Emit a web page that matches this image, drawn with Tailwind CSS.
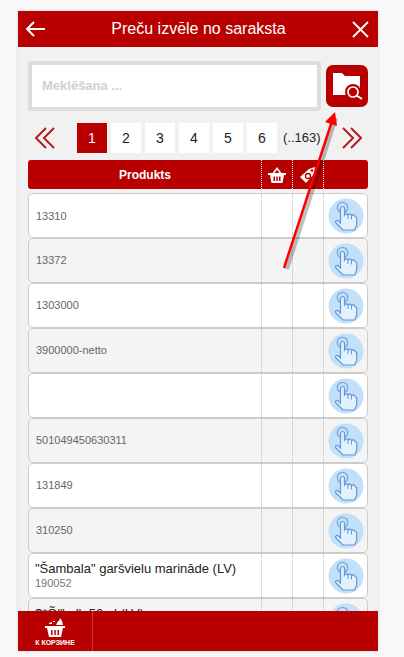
<!DOCTYPE html>
<html lang="en">
    <head>
        <meta charset="UTF-8" />
        <meta name="viewport" content="width=device-width, initial-scale=1.0" />
        <title>Preču izvēle no saraksta</title>
        <script src="https://cdn.jsdelivr.net/npm/@tailwindcss/browser@4"></script>
    </head>
    <body class="h-[657px] overflow-hidden bg-[#f8f8f8] font-['Liberation_Sans',Arial,sans-serif]">
        <svg class="hidden">
            <symbol id="hand" viewBox="0 0 36 36">
                <circle cx="18" cy="18" r="17.500" fill="#c2e0f7" />
                <circle cx="14.500" cy="9.500" r="5.200" fill="none" stroke="#7aa7e0" stroke-width="1.300" />
                <path fill="#e3f1fc" stroke="#6397dc" stroke-width="1.200" d="M12.500 10.500a2 2 0 0 1 4 0V17a2 2 0 0 1 3.500 0 2 2 0 0 1 3.500.500 2 2 0 0 1 3.500 1l1.700 1V27l-2 5H15l-7-7c-1.500-2 1-3.500 2.500-2l2 2z" />
                <path d="M20 17v4M23.500 17.500v4" stroke="#6397dc" stroke-width="1" />
            </symbol>
        </svg>

        <div class="relative mx-[18px] mt-[11px] flex h-[640px] w-[360px] flex-col overflow-hidden bg-[#f1f1f1] shadow-[0_0_3px_rgba(0,0,0,0.15)]">
            <!-- header -->
            <header class="flex h-9 shrink-0 items-center justify-between bg-[#b80000] pl-[7px] pr-[9px] text-white">
                <svg width="20" height="16" viewBox="0 0 20 16" fill="none" stroke="white" stroke-width="2"><path d="M20 8H2M9 1 2 8l7 7" /></svg>
                <h1 class="text-[16px]">Preču izvēle no saraksta</h1>
                <svg width="17" height="17" viewBox="0 0 17 17" fill="none" stroke="white" stroke-width="1.800"><path d="M1 1l15 15M16 1 1 16" /></svg>
            </header>

            <!-- search -->
            <div class="flex shrink-0 items-center gap-[5px] px-[10px] pt-[14px]">
                <div class="flex h-[50px] w-[293px] items-center rounded-[3px] border-4 border-[#dddddd] bg-white pl-[10px] text-[13px] font-bold text-[#d0d0d0]">Meklēšana ...</div>
                <button class="h-[42px] w-[42px] rounded-[7px] bg-[#b80000]">
                    <svg width="42" height="42" viewBox="0 0 42 42">
                        <path fill="white" d="M7 8h9l3 3h15v19H7z" />
                        <circle cx="27" cy="27" r="8" fill="#b80000" />
                        <circle cx="27" cy="27" r="5" fill="none" stroke="white" stroke-width="1.700" />
                        <path d="M30.500 30.500 36 34" stroke="white" stroke-width="2" />
                    </svg>
                </button>
            </div>

            <!-- pager -->
            <nav class="mt-[12px] flex h-[30px] shrink-0 items-center pl-[17px] text-[14px] text-[#222]">
                <svg class="mr-[22px]" width="20" height="22" viewBox="0 0 20 22" fill="none" stroke="#b02020" stroke-width="2"><path d="M11 1 1 11l10 10M19 1 9 11l10 10" /></svg>
                <div class="flex gap-1">
                    <span class="flex h-[30px] w-[30px] items-center justify-center bg-[#b80000] text-white">1</span>
                    <span class="flex h-[30px] w-[30px] items-center justify-center bg-white">2</span>
                    <span class="flex h-[30px] w-[30px] items-center justify-center bg-white">3</span>
                    <span class="flex h-[30px] w-[30px] items-center justify-center bg-white">4</span>
                    <span class="flex h-[30px] w-[30px] items-center justify-center bg-white">5</span>
                    <span class="flex h-[30px] w-[30px] items-center justify-center bg-white">6</span>
                </div>
                <span class="ml-[6px] w-[59px] whitespace-nowrap text-[13px]">(..163)</span>
                <svg width="20" height="22" viewBox="0 0 20 22" fill="none" stroke="#b02020" stroke-width="2"><path d="M1 1l10 10L1 21M9 1l10 10L9 21" /></svg>
            </nav>

            <!-- table head -->
            <div class="mx-[10px] mt-[7px] flex h-[29px] w-[340px] shrink-0 items-stretch rounded-[3px] bg-[#b80000] text-white">
                <div class="flex w-[233px] items-center justify-center pl-[1px] text-[12px] font-bold">Produkts</div>
                <div class="flex w-[31px] items-center justify-center border-l border-dotted border-white">
                    <svg width="18" height="16" viewBox="0 0 18 16" fill="white"><path d="M0 6h18v2H0zM2 8h14l-1.500 8h-11zM4.500 6 9 0l4.500 6h-2L9 2.800 6.500 6z" /><path fill="#b80000" d="M5.500 9.500H7V14H5.500zM8.300 9.500h1.500V14H8.300zM11 9.500h1.500V14H11z" /></svg>
                </div>
                <div class="flex w-[31px] items-center justify-center border-l border-dotted border-white">
                    <svg width="18" height="18" viewBox="0 0 18 18" fill="white"><path d="M1 11 10 3l6-2-1 7-8 9z" /><circle cx="13" cy="4.500" r="1.300" fill="#b80000" /><circle cx="9" cy="10" r="2.500" fill="none" stroke="#b80000" stroke-width="1.300" /></svg>
                </div>
                <div class="flex-1 border-l border-dotted border-white"></div>
            </div>

            <!-- rows -->
            <div class="mx-[10px] mt-1 flex w-[340px] flex-col">
                <div class="flex h-[45px] shrink-0 items-stretch rounded-[5px] border border-[#cccccc] bg-white">
                    <div class="flex w-[232px] items-center pl-[7px] pt-[1px] text-[11px] text-[#666]">13310</div>
                    <div class="w-[31px] border-l border-dotted border-[#bbbbbb]"></div>
                    <div class="w-[31px] border-l border-dotted border-[#bbbbbb]"></div>
                    <div class="flex flex-1 items-center justify-center border-l border-dotted border-[#bbbbbb]"><svg width="36" height="36"><use href="#hand" /></svg></div>
                </div>
                <div class="flex h-[45px] shrink-0 items-stretch rounded-[5px] border border-[#cccccc] bg-[#f4f4f4]">
                    <div class="flex w-[232px] items-center pl-[7px] text-[11px] text-[#666]">13372</div>
                    <div class="w-[31px] border-l border-dotted border-[#bbbbbb]"></div>
                    <div class="w-[31px] border-l border-dotted border-[#bbbbbb]"></div>
                    <div class="flex flex-1 items-center justify-center border-l border-dotted border-[#bbbbbb]"><svg width="36" height="36"><use href="#hand" /></svg></div>
                </div>
                <div class="flex h-[45px] shrink-0 items-stretch rounded-[5px] border border-[#cccccc] bg-white">
                    <div class="flex w-[232px] items-center pl-[7px] text-[11px] text-[#666]">1303000</div>
                    <div class="w-[31px] border-l border-dotted border-[#bbbbbb]"></div>
                    <div class="w-[31px] border-l border-dotted border-[#bbbbbb]"></div>
                    <div class="flex flex-1 items-center justify-center border-l border-dotted border-[#bbbbbb]"><svg width="36" height="36"><use href="#hand" /></svg></div>
                </div>
                <div class="flex h-[45px] shrink-0 items-stretch rounded-[5px] border border-[#cccccc] bg-[#f4f4f4]">
                    <div class="flex w-[232px] items-center pl-[7px] text-[11px] text-[#666]">3900000-netto</div>
                    <div class="w-[31px] border-l border-dotted border-[#bbbbbb]"></div>
                    <div class="w-[31px] border-l border-dotted border-[#bbbbbb]"></div>
                    <div class="flex flex-1 items-center justify-center border-l border-dotted border-[#bbbbbb]"><svg width="36" height="36"><use href="#hand" /></svg></div>
                </div>
                <div class="flex h-[45px] shrink-0 items-stretch rounded-[5px] border border-[#cccccc] bg-white">
                    <div class="w-[232px]"></div>
                    <div class="w-[31px] border-l border-dotted border-[#bbbbbb]"></div>
                    <div class="w-[31px] border-l border-dotted border-[#bbbbbb]"></div>
                    <div class="flex flex-1 items-center justify-center border-l border-dotted border-[#bbbbbb]"><svg width="36" height="36"><use href="#hand" /></svg></div>
                </div>
                <div class="flex h-[45px] shrink-0 items-stretch rounded-[5px] border border-[#cccccc] bg-[#f4f4f4]">
                    <div class="flex w-[232px] items-center pl-[7px] text-[11px] text-[#666]">501049450630311</div>
                    <div class="w-[31px] border-l border-dotted border-[#bbbbbb]"></div>
                    <div class="w-[31px] border-l border-dotted border-[#bbbbbb]"></div>
                    <div class="flex flex-1 items-center justify-center border-l border-dotted border-[#bbbbbb]"><svg width="36" height="36"><use href="#hand" /></svg></div>
                </div>
                <div class="flex h-[45px] shrink-0 items-stretch rounded-[5px] border border-[#cccccc] bg-white">
                    <div class="flex w-[232px] items-center pl-[7px] text-[11px] text-[#666]">131849</div>
                    <div class="w-[31px] border-l border-dotted border-[#bbbbbb]"></div>
                    <div class="w-[31px] border-l border-dotted border-[#bbbbbb]"></div>
                    <div class="flex flex-1 items-center justify-center border-l border-dotted border-[#bbbbbb]"><svg width="36" height="36"><use href="#hand" /></svg></div>
                </div>
                <div class="flex h-[45px] shrink-0 items-stretch rounded-[5px] border border-[#cccccc] bg-[#f4f4f4]">
                    <div class="flex w-[232px] items-center pl-[7px] text-[11px] text-[#666]">310250</div>
                    <div class="w-[31px] border-l border-dotted border-[#bbbbbb]"></div>
                    <div class="w-[31px] border-l border-dotted border-[#bbbbbb]"></div>
                    <div class="flex flex-1 items-center justify-center border-l border-dotted border-[#bbbbbb]"><svg width="36" height="36"><use href="#hand" /></svg></div>
                </div>
                <div class="flex h-[45px] shrink-0 items-stretch rounded-[5px] border border-[#cccccc] bg-white">
                    <div class="flex w-[232px] flex-col justify-center pl-[6px]">
                        <span class="whitespace-nowrap text-[13px] leading-[16px] text-[#222]">"Šambala" garšvielu marināde (LV)</span>
                        <span class="text-[11px] leading-[13px] text-[#777]">190052</span>
                    </div>
                    <div class="w-[31px] border-l border-dotted border-[#bbbbbb]"></div>
                    <div class="w-[31px] border-l border-dotted border-[#bbbbbb]"></div>
                    <div class="flex flex-1 items-center justify-center border-l border-dotted border-[#bbbbbb]"><svg width="36" height="36"><use href="#hand" /></svg></div>
                </div>
                <div class="flex h-[45px] shrink-0 items-stretch rounded-[5px] border border-[#cccccc] bg-[#f4f4f4]">
                    <div class="flex w-[232px] flex-col justify-center pl-[6px]">
                        <span class="whitespace-nowrap text-[13px] leading-[16px] text-[#222]">$*Õ'''&nbsp;&nbsp;&nbsp;ll&nbsp;&nbsp;50&nbsp;&nbsp;&nbsp;l (LV)</span>
                        <span class="text-[11px] leading-[13px] text-[#777]">190053</span>
                    </div>
                    <div class="w-[31px] border-l border-dotted border-[#bbbbbb]"></div>
                    <div class="w-[31px] border-l border-dotted border-[#bbbbbb]"></div>
                    <div class="flex flex-1 items-center justify-center border-l border-dotted border-[#bbbbbb]"><svg width="36" height="36"><use href="#hand" /></svg></div>
                </div>
            </div>

            <!-- footer -->
            <footer class="absolute bottom-0 left-0 flex h-10 w-[360px] bg-[#b80000] text-white">
                <div class="flex w-[75px] flex-col items-center justify-center border-r border-[#cc3333] pt-[1px]">
                    <svg width="20" height="20" viewBox="0 0 20 20" fill="white"><path d="M0 9h20v2H0zM2 11h16l-2 9H4z" /><path d="M11 8l2-4h1l1-3 2 3 1 4zM4 6l3-1v2H4zM8 4h2v1H8z" /><path fill="#b80000" d="M6 13h1.500v5H6zM9.300 13h1.500v5H9.300zM12.500 13H14v5h-1.500z" /></svg>
                    <span class="mt-[1px] text-[7px] font-bold leading-[9px]">К КОРЗИНЕ</span>
                </div>
            </footer>
        </div>

        <!-- red annotation arrow -->
        <svg class="pointer-events-none absolute left-0 top-0" width="404" height="657" viewBox="0 0 404 657">
            <path d="M287 269 336 118" stroke="rgba(0,0,0,0.25)" stroke-width="4" />
            <path d="M284 268 333 118" stroke="#ff0000" stroke-width="2.500" />
            <path d="M335 112 325 122 337 126z" fill="#ff0000" />
        </svg>
    </body>
</html>
